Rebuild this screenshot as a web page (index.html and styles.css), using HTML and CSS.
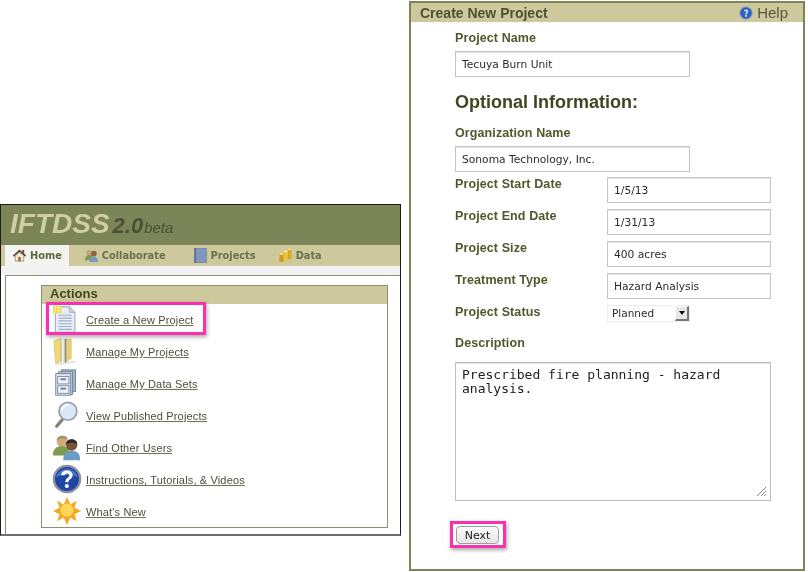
FILE: index.html
```html
<!DOCTYPE html>
<html lang="en">
<head>
<meta charset="utf-8">
<title>IFTDSS - Create New Project</title>
<link rel="stylesheet" href="styles.css">
</head>
<body>
<section class="window home">
  <header class="banner"><span class="logo">IFTDSS</span><span class="version">2.0</span><span class="beta">beta</span></header>
  <nav class="tabs">
    <a class="tab active">
      <svg class="tab-icon" viewBox="0 0 16 16"><path d="M8 1.500 1 8l1 1.200L8 4l6 5.200L15 8z" fill="#5b4030"/><path d="M3.500 8.500 8 4.600l4.500 3.900V14h-9z" fill="#f2eddc" stroke="#6d6a58" stroke-width=".6"/><rect x="6.600" y="9.500" width="2.800" height="4.500" fill="#a8662e"/><rect x="11" y="2" width="2" height="4" fill="#7b4a2a"/></svg>
      Home</a>
    <a class="tab">
      <svg class="tab-icon" viewBox="0 0 16 16"><circle cx="5.500" cy="5" r="3" fill="#c9a27c"/><path d="M1 13c0-4 2-5.500 4.500-5.500S10 9 10 13z" fill="#7f9a55"/><circle cx="10.500" cy="6" r="3" fill="#8a6446"/><path d="M6 15c0-4 2-6 4.500-6S15 11 15 15z" fill="#6f9cc0"/></svg>
      Collaborate</a>
    <a class="tab tab-projects">
      <svg class="tab-icon" viewBox="0 0 16 16"><rect x="1.500" y="0" width="13" height="16" rx="1" fill="#8197bd" stroke="#6a7ea3" stroke-width=".7"/><rect x="1.500" y="0" width="1.800" height="16" fill="#5e7198"/></svg>
      Projects</a>
    <a class="tab">
      <svg class="tab-icon" viewBox="0 0 16 16"><path d="M10.500 1h4v11h-4z" fill="#d9a72a"/><ellipse cx="12.500" cy="1.500" rx="2" ry="1" fill="#f4dc7a"/><path d="M6 3h4.500v10.500H6z" fill="#eec141"/><ellipse cx="8.250" cy="3.500" rx="2.250" ry="1.100" fill="#f8e798"/><path d="M1.500 6H6v9H1.500z" fill="#d39c24"/><ellipse cx="3.750" cy="6.300" rx="2.250" ry="1.100" fill="#f4dc7a"/></svg>
      Data</a>
  </nav>
  <div class="strip"></div>
  <main class="content">
    <section class="actions">
      <h2 class="actions-title">Actions</h2>
      <ul class="action-list">
        <li class="action">
          <svg class="action-icon" viewBox="0 0 32 32"><path d="M3.500 3h15l6 6v21h-21z" fill="#e9eef6" stroke="#8d9db8"/><path d="M18.500 3v6h6z" fill="#c6d1e2" stroke="#8d9db8" stroke-width=".6"/><path d="M7 12h14M7 15h14M7 18h14M7 21h14M7 24h14M7 27h14" stroke="#9fb0c9" stroke-width="1.200"/><path d="M1 2h9v8H1z" fill="#f2d544"/><path d="M1 4h9M1 7h9M3.500 2v8M7 2v8" stroke="#fbf1b0" stroke-width=".8"/></svg>
          <a class="action-link">Create a New Project</a>
        </li>
        <li class="action">
          <svg class="action-icon" viewBox="0 0 32 32"><path d="M5 29 24 26l2 2-18 3z" fill="#cfcfcf" opacity=".6"/><path d="M15 3h6v21l-6 4z" fill="#e8cf6e"/><path d="M9 3h7v25H9z" fill="#c9c6b0"/><path d="M11.500 3v25" stroke="#fff" stroke-width="1.500"/><path d="M14.500 3v25" stroke="#8c8a78" stroke-width="1.200"/><path d="M2 5l7-2.500V27l-5 3z" fill="#efd772" stroke="#cfae48" stroke-width=".5"/></svg>
          <a class="action-link">Manage My Projects</a>
        </li>
        <li class="action">
          <svg class="action-icon" viewBox="0 0 32 32"><rect x="10" y="2" width="15" height="23" fill="#a9b8cf" stroke="#6f7f99"/><rect x="7" y="4" width="15" height="24" fill="#c7d2e2" stroke="#6f7f99"/><rect x="4" y="6" width="16" height="23" fill="#dfe6f0" stroke="#6f7f99"/><rect x="6" y="9" width="12" height="8" fill="#eef2f7" stroke="#7f8fa8"/><rect x="6" y="19" width="12" height="8" fill="#eef2f7" stroke="#7f8fa8"/><rect x="9" y="11" width="6" height="2" fill="#6f7f99"/><rect x="9" y="21" width="6" height="2" fill="#6f7f99"/></svg>
          <a class="action-link">Manage My Data Sets</a>
        </li>
        <li class="action">
          <svg class="action-icon" viewBox="0 0 32 32"><path d="M11 21 5 28" stroke="#85827c" stroke-width="3.500" stroke-linecap="round"/><circle cx="17" cy="12" r="9.500" fill="#dbe8f7" stroke="#9aa3ad" stroke-width="2"/><path d="M10 11c1-4 4-6 8-6" stroke="#fff" stroke-width="2" fill="none"/></svg>
          <a class="action-link">View Published Projects</a>
        </li>
        <li class="action">
          <svg class="action-icon" viewBox="0 0 32 32"><circle cx="11" cy="10" r="6" fill="#d3a77e"/><path d="M5 9c0-6 11-7 12-1-4-2-8-2-12 1z" fill="#9f9360"/><path d="M1 25c0-7 4-10 10-10s8 3 8 10z" fill="#7e9c4f"/><circle cx="21" cy="14" r="6" fill="#7a5236"/><path d="M15 13c0-7 12-7 12 0-4-2-8-2-12 0z" fill="#2f2a26"/><path d="M12 30c0-7 3-10 9-10s9 3 9 10z" fill="#6b9cc4"/></svg>
          <a class="action-link">Find Other Users</a>
        </li>
        <li class="action">
          <svg class="action-icon" viewBox="0 0 32 32"><circle cx="16" cy="16" r="14" fill="#1d47a5" stroke="#8d929c" stroke-width="2.500"/><path d="M4 14c3-7 8-9 12-9s9 2 12 9c-6-3-18-3-24 0z" fill="#5f86d4" opacity=".7"/><path d="M10 12c0-3.500 3-5 6-5s6 1.700 6 5c0 4-4.500 4-4.500 7.500h-3.200c0-5 4.200-5 4.200-7.500 0-1.200-1-2-2.500-2-1.600 0-2.500 1-2.500 2z" fill="#fff"/><circle cx="15.800" cy="23.500" r="2.200" fill="#fff"/></svg>
          <a class="action-link">Instructions, Tutorials, &amp; Videos</a>
        </li>
        <li class="action">
          <svg class="action-icon" viewBox="0 0 32 32"><path d="M16 1l3.500 8 7-4-2.500 7.500L31 16l-7 3.500 2.500 7.500-7-4L16 31l-3.500-8-7 4L8 19.500 1 16l7-3.500L5.500 5l7 4z" fill="#f5a623"/><circle cx="16" cy="15" r="7" fill="#fcd75a"/></svg>
          <a class="action-link">What's New</a>
        </li>
      </ul>
      <div class="highlight highlight-create"></div>
    </section>
  </main>
</section>

<section class="window create">
  <header class="form-header">
    <h1 class="form-title">Create New Project</h1>
    <span class="help">
      <svg class="help-glyph" viewBox="0 0 16 16"><circle cx="8" cy="8" r="7" fill="#2d62c4" stroke="#8c9ab0"/><path d="M5.800 6.300C5.800 4.800 7 4 8.100 4s2.400.8 2.400 2.100c0 1.900-1.800 1.900-1.800 3.500H7.300c0-2.200 1.700-2.300 1.700-3.500 0-.5-.4-.8-.9-.8-.6 0-.9.400-.9.800z" fill="#fff"/><circle cx="8" cy="11.400" r="1" fill="#fff"/></svg>
      Help
    </span>
  </header>
  <form class="form">
    <label class="label">Project Name</label>
    <input class="field field-wide name-field" type="text" value="Tecuya Burn Unit">
    <h2 class="optional">Optional Information:</h2>
    <label class="label">Organization Name</label>
    <input class="field field-wide org-field" type="text" value="Sonoma Technology, Inc.">
    <div class="rows">
      <label class="label row-label">Project Start Date</label>
      <input class="field field-row" type="text" value="1/5/13">
      <label class="label row-label">Project End Date</label>
      <input class="field field-row" type="text" value="1/31/13">
      <label class="label row-label">Project Size</label>
      <input class="field field-row" type="text" value="400 acres">
      <label class="label row-label">Treatment Type</label>
      <input class="field field-row" type="text" value="Hazard Analysis">
      <label class="label row-label">Project Status</label>
      <div class="select"><span class="select-value">Planned</span><span class="select-arrow"></span></div>
    </div>
    <label class="label description-label">Description</label>
    <div class="textarea">
      <textarea class="textarea-input" spellcheck="false">Prescribed fire planning - hazard analysis.</textarea>
      <svg class="grip" viewBox="0 0 12 12"><path d="M11 2 2 11M11 6l-5 5M11 9l-2 2" stroke="#8b8b8b" stroke-width="1"/></svg>
    </div>
    <div class="buttons">
      <button class="next" type="button">Next</button>
      <div class="highlight highlight-next"></div>
    </div>
  </form>
</section>
</body>
</html>
```

FILE: styles.css
```css
* { box-sizing: border-box; }
html, body { margin: 0; padding: 0; }
body {
  width: 808px;
  height: 572px;
  position: relative;
  overflow: hidden;
  background: #fff;
  font-family: "Liberation Sans", Arial, sans-serif;
}
.window { position: absolute; overflow: hidden; filter: blur(0.45px); }

/* left window */
.home {
  left: 0; top: 204px; width: 401px; height: 332px;
  border: 1px solid #1c1c1c;
  border-bottom: 2px solid #6f6f6f;
  background: #fff;
  display: flex;
  flex-direction: column;
}
.banner {
  height: 40px;
  background: #7b8557;
  padding: 2px 0 0 9px;
  display: flex;
  align-items: baseline;
  font-style: italic;
  flex: none;
}
.logo { font-size: 28px; line-height: 33px; font-weight: bold; color: #cfcfa2; }
.version { font-size: 22px; font-weight: bold; color: #4c4f37; margin-left: 3px; }
.beta { font-size: 15px; color: #4c4f37; margin-left: 1px; }
.tabs {
  height: 21px;
  background: #cdc99c;
  padding-left: 4px;
  display: flex;
  flex: none;
}
.tab {
  display: flex;
  align-items: center;
  gap: 3px;
  font: bold 9.8px "DejaVu Sans", Verdana, sans-serif;
  color: #66744a;
  padding: 0 7px;
  margin-right: 9px;
}
.tab.active { background: #f3f3ef; color: #5a6a40; margin-right: 8px; }
.tab-projects { margin-left: 4px; margin-right: 8px; }
.tab-icon { width: 15px; height: 15px; flex: none; }
.strip { height: 9px; background: #f2f2f2; flex: none; }
.content {
  flex: 1;
  margin-left: 4px;
  border-left: 1px solid #8b8f78;
  border-top: 1px solid #8b8f78;
  padding: 9px 12px 0 35px;
  background: #fff;
}
.actions {
  position: relative;
  border: 1px solid #8c9070;
  height: 243px;
  background: #fff;
}
.actions-title {
  margin: 0;
  height: 18px;
  background: #cdc99c;
  padding-left: 8px;
  font-size: 13px;
  line-height: 16px;
  font-weight: bold;
  color: #3f4622;
}
.action-list { list-style: none; margin: 0; padding: 0; }
.action {
  height: 32px;
  display: flex;
  align-items: center;
  padding-left: 10px;
  gap: 4px;
}
.action-icon { width: 30px; height: 30px; flex: none; margin-bottom: 2px; }
.action-link {
  font-size: 11px;
  letter-spacing: .15px;
  color: #4b4f3a;
  text-decoration: underline;
  text-decoration-color: #6d7552;
}
.highlight {
  position: absolute;
  border: 3px solid #fb2fb2;
  box-shadow: 1px 2px 4px rgba(0,0,0,.35);
  pointer-events: none;
}
.highlight-create { left: 4px; top: 16px; width: 160px; height: 33px; }

/* right window */
.create {
  left: 409px; top: 1px; width: 396px; height: 570px;
  border: 2px solid #7b8557;
  background: #fff;
}
.form-header {
  height: 19px;
  background: #cdc99c;
  padding: 0 15px 0 9px;
  display: flex;
  align-items: center;
  justify-content: space-between;
}
.form-title { margin: 0; font-size: 14px; font-weight: bold; color: #4c5230; }
.help { display: flex; align-items: center; gap: 4px; font-size: 15px; color: #55583e; }
.help-glyph { width: 14px; height: 14px; }
.form { padding: 9px 0 0 44px; display: flex; flex-direction: column; align-items: flex-start; }
.label { font-size: 12.5px; line-height: 15px; font-weight: bold; color: #4f5a2c; letter-spacing: .1px; }
.field {
  display: block;
  border: 1px solid #c4c4c4;
  box-shadow: inset 0 1px 1px #e4e4e4;
  border-radius: 0;
  background: #fff;
  padding: 0 6px;
  font: 10.7px "DejaVu Sans", Verdana, sans-serif;
  color: #2b2b2b;
  outline: none;
}
.field-wide { width: 235px; height: 26px; }
.name-field { margin-top: 5px; }
.org-field { margin-top: 5px; }
.optional {
  margin: 14px 0 13px;
  font-size: 18px;
  line-height: 22px;
  font-weight: bold;
  color: #3f4622;
}
.rows {
  margin-top: 5px;
  display: grid;
  grid-template-columns: 152px 164px;
  grid-auto-rows: 26px;
  row-gap: 6px;
}
.row-label { line-height: 14px; }
.field-row { width: 164px; height: 26px; }
.select {
  width: 83px;
  height: 17px;
  display: flex;
  align-items: center;
  justify-content: space-between;
  border: 1px solid #ececec;
  font: 10.5px/12px "DejaVu Sans", Verdana, sans-serif;
  color: #2b2b2b;
  padding-left: 4px;
}
.select-value { margin-top: -2px; }
.select-arrow {
  width: 14px;
  height: 15px;
  background: #e6e6e6;
  border-right: 2px solid #777;
  border-bottom: 2px solid #777;
  border-top: 1px solid #fff;
  border-left: 1px solid #fff;
  position: relative;
}
.select-arrow::after {
  content: "";
  position: absolute;
  left: 3px; top: 4px;
  border: 3px solid transparent;
  border-top: 4px solid #111;
  border-bottom: 0;
}
.description-label { margin-top: 5px; }
.textarea {
  position: relative;
  margin-top: 11px;
  width: 316px;
  height: 139px;
  border: 1px solid #bdbdbd;
  box-shadow: inset 0 1px 1px #e4e4e4;
}
.textarea-input {
  display: block;
  width: 100%;
  height: 100%;
  border: 0;
  outline: none;
  resize: none;
  background: transparent;
  padding: 5px 6px;
  font: 13px/14px "DejaVu Sans Mono", Monaco, monospace;
  color: #222;
}
.grip { position: absolute; right: 3px; bottom: 3px; width: 12px; height: 12px; }
.buttons { position: relative; margin-top: 25px; margin-left: 1px; }
.next {
  display: block;
  width: 43px;
  height: 18px;
  padding: 0;
  border: 1px solid #9d9d9d;
  border-radius: 4px;
  background: linear-gradient(#fdfdfd, #e4e4e4);
  font: 11px "DejaVu Sans", Verdana, sans-serif;
  color: #222;
}
.highlight-next { left: -6px; top: -5px; width: 56px; height: 27px; }
```
